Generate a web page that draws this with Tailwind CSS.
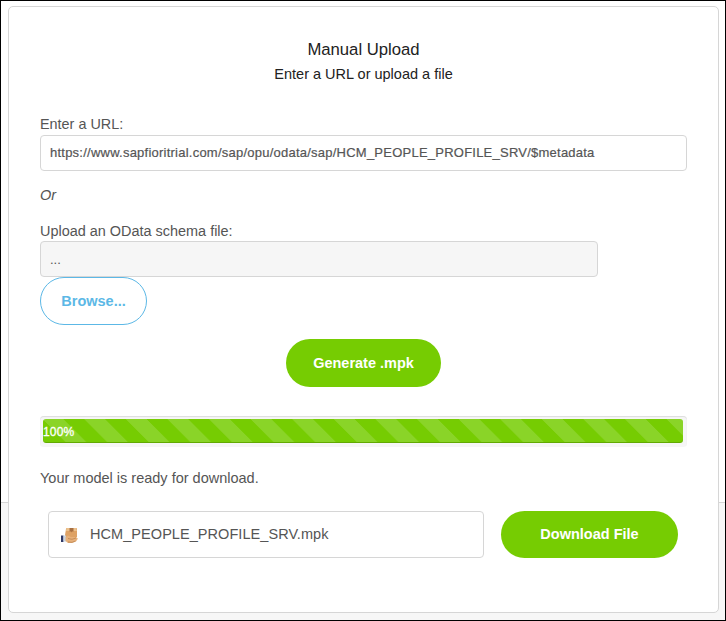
<!DOCTYPE html>
<html lang="en">
<head>
<meta charset="utf-8">
<title>Manual Upload</title>
<script src="https://cdn.jsdelivr.net/npm/@tailwindcss/browser@4"></script>
</head>
<body class="h-[621px] w-[726px] overflow-hidden border border-black bg-[linear-gradient(#fff_502px,#d6d6d6_502px,#d6d6d6_503px,#f7f7f7_503px)] pt-[5px] pl-[7px] font-['Liberation_Sans',Arial,sans-serif] text-[14px] leading-[20px] text-[#555]">
<main class="flex h-[607px] w-[711px] flex-col rounded-[5px] border border-[#d6d6d6] bg-white px-[31px] pt-[31px]">
  <header class="text-center text-[#222]">
    <h1 class="h-[24px] text-[16.7px] leading-[24px]">Manual Upload</h1>
    <p class="mt-[2px] h-[20px] text-[14.5px]">Enter a URL or upload a file</p>
  </header>
  <label class="mt-[30px] h-[21px] text-[14.4px]">Enter a URL:</label>
  <div class="flex h-[36px] items-center rounded border border-[#d6d6d6] px-[9px] pb-px text-[13px] [-webkit-text-stroke:0.2px_#555]"><span class="tracking-[0.235px]">https://www.sapfioritrial.com/sap/opu/odata/sap/HCM_PEOPLE_PROFILE_SRV/$metadata</span></div>
  <p class="mt-[14px] h-[20px] text-[14.5px] italic">Or</p>
  <label class="mt-[16px] h-[20px] text-[14.45px]">Upload an OData schema file:</label>
  <div class="flex h-[36px] w-[558px] items-center rounded border border-[#d6d6d6] bg-[#f6f6f6] px-[9px] pt-[2px] text-[13px]">...</div>
  <button class="h-[48px] w-[107px] rounded-full border border-[#5cb8e6] text-[14.5px] font-bold text-[#5cb8e6]">Browse...</button>
  <button class="mt-[14px] h-[48px] w-[155px] self-center rounded-full bg-[#76cc02] text-[14.5px] font-bold text-white">Generate .mpk</button>
  <div class="mt-[29px] h-[31px] rounded bg-[#f6f6f6] py-[3px] pr-[4px] pl-[3px] shadow-[inset_0_1px_1px_#ddd]">
    <div class="flex h-[24px] items-center rounded-[3px] bg-[#76cc02] bg-[linear-gradient(45deg,rgba(255,255,255,.15)_25%,transparent_25%,transparent_50%,rgba(255,255,255,.15)_50%,rgba(255,255,255,.15)_75%,transparent_75%)] bg-size-[41.6px_41.6px] pt-px text-[12px] tracking-[0.15px] text-white shadow-[inset_0_-1px_0_#62aa02] [-webkit-text-stroke:0.3px_#fff]">100%</div>
  </div>
  <p class="mt-[21px] h-[20px] text-[14.5px]">Your model is ready for download.</p>
  <div class="mt-[23px] flex gap-[17px] pl-[8px]">
    <div class="flex h-[47px] w-[436px] items-center gap-[12px] rounded border border-[#d6d6d6] pl-[12px] text-[14.5px]">
      <svg class="mt-[2px] h-[17px] w-[17px] shrink-0" viewBox="0 0 17 17"><path d="M5.500 1h9.500q1 0 1 1v8l-3 3H4V8l1-6z" fill="#dea265"/><path d="M5.500 1h9.500l1 3H5z" fill="#ecc18c"/><path d="M8.500 1h4v3.500h-1.500l-.5 1-.5-1H8.500z" fill="#a87042"/><path d="M0 8.500h2.500V15H0z" fill="#303967"/><path d="M2.500 8.500h2.500v6H2.500z" fill="#c9d5e2"/><path d="M4.500 10L7 8.500l3 1.500h3.500l3.500 1.500-2 3-4 1.500H7l-2.500-2z" fill="#e7b17b"/><path d="M7 11.500l4 .8 4-1.300M7 15l4 .3 3.500-1.300" fill="none" stroke="#b87f4c" stroke-width=".7"/></svg>
      <span class="pb-px tracking-[0.06px]">HCM_PEOPLE_PROFILE_SRV.mpk</span>
    </div>
    <button class="h-[47px] w-[177px] rounded-full bg-[#76cc02] pb-[2px] text-[14.5px] font-bold text-white">Download File</button>
  </div>
</main>
</body>
</html>
